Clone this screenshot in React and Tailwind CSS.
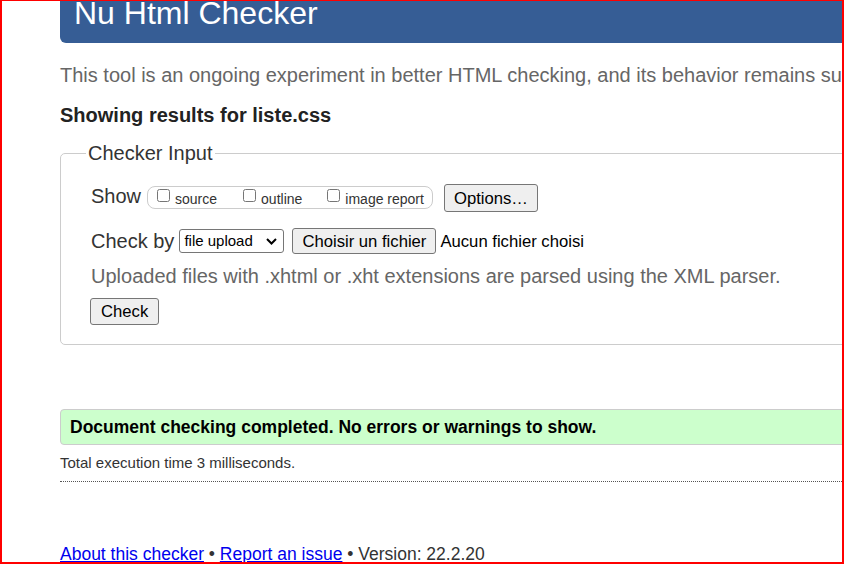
export default function App() {
  return (
    <div className="w-[844px] h-[564px] overflow-hidden border-l-2 border-r-2 border-t border-b-2 border-[#ff0000] bg-white font-['Liberation_Sans',Arial,sans-serif] text-[#222]">
      <div className="w-[1100px] pl-[58px]">
        <header className="h-[42px] bg-[#365d95] rounded-bl-[6px] pl-[14px]">
          <h1 className="text-[32px] leading-[24px] text-white">Nu Html Checker</h1>
        </header>

        <p className="mt-[18px] text-[20px] leading-[28px] text-[#666] whitespace-nowrap">
          This tool is an ongoing experiment in better HTML checking, and its behavior remains subject to change
        </p>
        <p className="mt-[12px] text-[20px] leading-[28px] font-bold">Showing results for liste.css</p>

        <fieldset className="mt-[10px] border border-[#ccc] rounded-[5px] pl-[30px] pt-[17px] pb-[19px]">
          <legend className="-ml-[5px] px-[2px] text-[20px] leading-[28px] text-[#333]">Checker Input</legend>

          <div className="flex items-center h-[28px]">
            <span className="text-[20px] leading-[28px] text-[#333] mb-[4px]">Show</span>
            <div className="ml-[6px] mb-[1px] h-[23px] flex items-start border border-[#ccc] rounded-[8px] pl-[9px] pr-[8px] text-[14px] leading-[16px] text-[#333]">
              <label className="flex items-start gap-[5px]">
                <input type="checkbox" className="m-0 mt-[1.5px] w-[13px] h-[13px]" />
                <span className="mt-[3.5px]">source</span>
              </label>
              <label className="flex items-start gap-[5px] ml-[26px]">
                <input type="checkbox" className="m-0 mt-[1.5px] w-[13px] h-[13px]" />
                <span className="mt-[3.5px]">outline</span>
              </label>
              <label className="flex items-start gap-[5px] ml-[25px]">
                <input type="checkbox" className="m-0 mt-[1.5px] w-[13px] h-[13px]" />
                <span className="mt-[3.5px]">image report</span>
              </label>
            </div>
            <button className="ml-[11px] h-[28px] px-[9px] bg-[#efefef] border border-[#767676] rounded-[3px] text-[16.67px] text-black">
              Options…
            </button>
          </div>

          <div className="flex items-center h-[26px] mt-[16px]">
            <span className="text-[20px] leading-[28px] text-[#333]">Check by</span>
            <div className="ml-[5px] w-[105px] h-[24px] flex items-center justify-between border border-[#767676] rounded-[3px] pl-[4px] pr-[6px] text-[15px] text-black">
              <span>file upload</span>
              <svg width="11" height="7" viewBox="0 0 11 7" fill="none" stroke="#000" strokeWidth="2">
                <path d="M1 1l4.5 4.5L10 1" />
              </svg>
            </div>
            <button className="ml-[8px] h-[26px] px-[9px] bg-[#efefef] border border-[#767676] rounded-[3px] text-[16.67px] text-black">
              Choisir un fichier
            </button>
            <span className="ml-[4px] text-[16.67px] text-black">Aucun fichier choisi</span>
          </div>

          <p className="mt-[8px] text-[20px] leading-[28px] text-[#666]">
            Uploaded files with .xhtml or .xht extensions are parsed using the XML parser.
          </p>

          <button className="mt-[8px] -ml-[1px] h-[27px] px-[10px] bg-[#efefef] border border-[#767676] rounded-[3px] text-[16.67px] text-black">
            Check
          </button>
        </fieldset>

        <div className="mt-[64px] h-[36px] flex items-center bg-[#ccffcc] border border-[#ccc] rounded-[4px] pl-[9px] text-[17.5px] leading-[20px] font-bold text-black">
          Document checking completed. No errors or warnings to show.
        </div>

        <p className="mt-[9px] text-[15px] leading-[18px] text-[#333]">Total execution time 3 milliseconds.</p>
        <div className="mt-[9px] border-t border-dotted border-[#555]"></div>

        <p className="mt-[62px] text-[17.5px] leading-[20px] text-[#333]">
          <a href="#" className="text-[#0000ee] underline">About this checker</a>
          {' • '}
          <a href="#" className="text-[#0000ee] underline">Report an issue</a>
          {' • Version: 22.2.20'}
        </p>
      </div>
    </div>
  )
}
